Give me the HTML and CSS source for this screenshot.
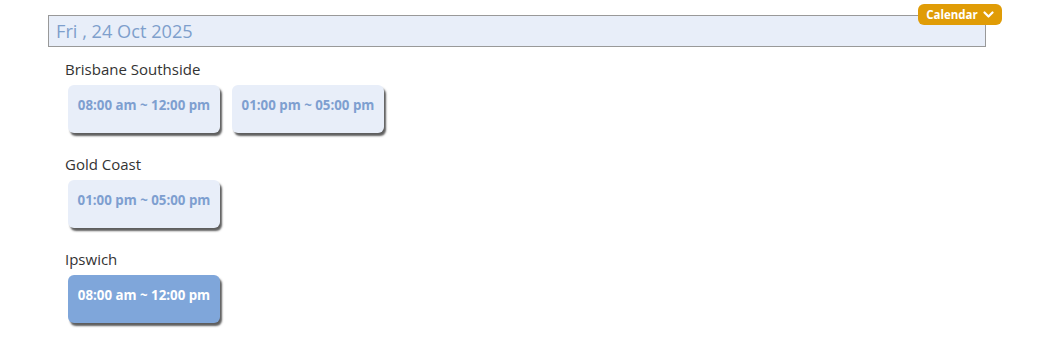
FILE: index.html
```html
<!DOCTYPE html>
<html>
<head>
<meta charset="utf-8">
<link rel="stylesheet" href="styles.css">
</head>
<body>
<div class="page">
  <div class="date-bar">Fri , 24 Oct 2025</div>
  <button class="cal-btn">Calendar <svg width="11" height="8" viewBox="0 0 11 8"><path d="M1.5 1.5 L5.5 5.5 L9.5 1.5" fill="none" stroke="#fff" stroke-width="2.2" stroke-linecap="round" stroke-linejoin="round"/></svg></button>
  <div class="sites">
    <div class="site">
      <div class="site-name">Brisbane Southside</div>
      <div class="slots">
        <div class="slot">08:00 am ~ 12:00 pm</div>
        <div class="slot">01:00 pm ~ 05:00 pm</div>
      </div>
    </div>
    <div class="site">
      <div class="site-name">Gold Coast</div>
      <div class="slots">
        <div class="slot">01:00 pm ~ 05:00 pm</div>
      </div>
    </div>
    <div class="site">
      <div class="site-name">Ipswich</div>
      <div class="slots">
        <div class="slot active">08:00 am ~ 12:00 pm</div>
      </div>
    </div>
  </div>
</div>
</body>
</html>
```
FILE: styles.css
```css
* { box-sizing: border-box; }
html, body { margin: 0; padding: 0; background: #fff; }
body { font-family: "Open Sans", "Liberation Sans", sans-serif; }
.page { position: relative; padding: 15px 0 0 48px; width: 1054px; height: 344px; }
.date-bar {
  width: 938px; height: 32px;
  border: 1px solid #999;
  background: #e8eef9;
  color: #7e9fcc;
  font-size: 18.2px;
  line-height: 30px;
  padding-left: 7px;
}
.cal-btn {
  position: absolute; left: 918px; top: 4px;
  width: 84px; height: 21px;
  border: none; border-radius: 6px;
  background: #e09c06;
  color: #fff;
  font-family: "Open Sans", "Liberation Sans", sans-serif;
  font-weight: 700; font-size: 11.5px;
  padding: 0 0 0 0;
  display: flex; align-items: center; justify-content: center; gap: 5px;
}
.cal-btn svg { display: block; }
.sites { padding-left: 17px; padding-top: 12px; }
.site { height: 95px; }
.site-name { font-size: 15px; color: #333; line-height: 20px; height: 26px; }
.slots { display: flex; gap: 12px; padding-left: 3px; }
.slot {
  width: 152px; height: 48px;
  border-radius: 6px;
  background: #e8eef9;
  color: #7e9fd0;
  font-weight: 700; font-size: 13.3px;
  display: flex; align-items: center; justify-content: center;
  padding-bottom: 8px;
  box-shadow: 2px 3px 2px rgba(40,40,40,0.75);
}
.slot.active { background: #7fa6da; color: #fff; }
```
